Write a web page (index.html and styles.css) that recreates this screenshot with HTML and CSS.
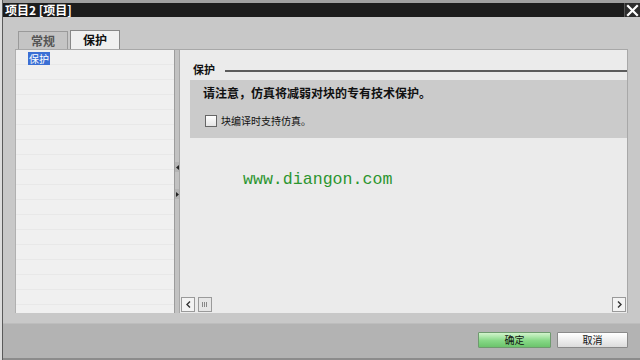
FILE: index.html
```html
<!DOCTYPE html>
<html lang="zh">
<head>
<meta charset="utf-8">
<title>项目2 [项目]</title>
<link rel="stylesheet" href="styles.css">
</head>
<body>
<div class="outside"></div>
<div class="dialog">
  <div class="titlebar">
    <span class="title">项目2 [项目]</span>
    <span class="close">
      <svg width="13" height="13" viewBox="0 0 13 13"><path d="M2 2 L11 11 M11 2 L2 11" stroke="#fff" stroke-width="2.2" stroke-linecap="square"/></svg>
    </span>
  </div>
  <div class="tabs">
    <div class="tab">常规</div>
    <div class="tab active">保护</div>
  </div>
  <div class="content">
    <div class="left-pane">
      <span class="tree-item">保护</span>
    </div>
    <div class="splitter">
      <span class="split-btn"><svg width="3" height="5" viewBox="0 0 3 5"><path d="M3 0 L0 2.5 L3 5 Z" fill="#222"/></svg></span>
      <span class="split-btn"><svg width="3" height="5" viewBox="0 0 3 5"><path d="M0 0 L3 2.5 L0 5 Z" fill="#222"/></svg></span>
    </div>
    <div class="right-pane">
      <div class="sec-head">
        <span class="sec-title">保护</span>
        <span class="sec-line"></span>
      </div>
      <div class="notice">
        <div class="notice-text">请注意，仿真将减弱对块的专有技术保护。</div>
        <label class="check-row"><span class="checkbox"></span><span class="check-label">块编译时支持仿真。</span></label>
      </div>
      <div class="watermark">www.diangon.com</div>
      <div class="spacer"></div>
      <div class="hscroll">
        <span class="sb-btn"><svg width="5" height="7" viewBox="0 0 5 7"><path d="M4 0.5 L1 3.5 L4 6.5" stroke="#333" stroke-width="1.4" fill="none"/></svg></span>
        <span class="sb-btn thumb"><svg width="6" height="5" viewBox="0 0 6 5"><path d="M0.5 0 V5 M2.5 0 V5 M4.5 0 V5" stroke="#888" stroke-width="1"/></svg></span>
        <span class="sb-track"></span>
        <span class="sb-btn"><svg width="5" height="7" viewBox="0 0 5 7"><path d="M1 0.5 L4 3.5 L1 6.5" stroke="#333" stroke-width="1.4" fill="none"/></svg></span>
      </div>
    </div>
  </div>
  <div class="gap"></div>
  <div class="footer">
    <button class="btn ok">确定</button>
    <button class="btn cancel">取消</button>
  </div>
</div>
</body>
</html>
```

FILE: styles.css
```css
html, body {
  margin: 0;
  padding: 0;
}
body {
  width: 640px;
  height: 360px;
  overflow: hidden;
  display: flex;
  background: #d6d6d6;
  font-family: "Noto Sans CJK SC", "DejaVu Sans", sans-serif;
}
.outside {
  width: 2px;
  background: #dcdcdc;
}
.dialog {
  flex: 1;
  display: flex;
  flex-direction: column;
  border-left: 1px solid #5a5a5a;
  background: #c8c8c8;
}
.titlebar {
  height: 14px;
  border-top: 3px solid #a0a0a0;
  background: #1c1c1c;
  display: flex;
  align-items: center;
  justify-content: space-between;
}
.title {
  color: #fff;
  font-size: 12px;
  font-weight: bold;
  line-height: 14px;
  padding-left: 2px;
}
.close {
  width: 15px;
  height: 14px;
  background: #2c2c2c;
  border-left: 1px solid #555;
  display: flex;
  align-items: center;
  justify-content: center;
}
.tabs {
  display: flex;
  align-items: flex-end;
  gap: 2px;
  padding: 13px 0 0 15px;
  height: 19px;
}
.tab {
  width: 48px;
  height: 17px;
  border: 1px solid #9a9a9a;
  border-bottom: none;
  background: #c4c4c4;
  color: #555;
  font-size: 12px;
  font-weight: bold;
  line-height: 17px;
  text-align: center;
}
.tab.active {
  height: 18px;
  background: #f0f0f0;
  color: #111;
  border-color: #888;
}
.content {
  display: flex;
  height: 263px;
  margin: 0 12px;
  border-top: 1px solid #a8a8a8;
}
.left-pane {
  width: 159px;
  display: flex;
  flex-direction: column;
  align-items: flex-start;
  background-color: #f0f0f0;
  background-image: repeating-linear-gradient(to bottom, transparent 0, transparent 14px, #e8e8e8 14px, #e8e8e8 15px);
  border-left: 1px solid #b0b0b0;
  padding-top: 2px;
  box-sizing: border-box;
}
.tree-item {
  margin-left: 12px;
  padding: 0 1px;
  height: 13px;
  line-height: 13px;
  font-size: 10px;
  color: #fff;
  background: #3b6fd4;
}
.splitter {
  width: 4px;
  background: #c2c2c2;
  border-left: 1px solid #9c9c9c;
  border-right: 1px solid #a8a8a8;
  display: flex;
  flex-direction: column;
  align-items: center;
  padding-top: 112px;
  gap: 17px;
}
.split-btn {
  width: 4px;
  height: 10px;
  background: #b4b4b4;
  display: flex;
  align-items: center;
  justify-content: center;
}
.right-pane {
  flex: 1;
  display: flex;
  flex-direction: column;
  background: #ebebeb;
  border-right: 1px solid #a8a8a8;
}
.sec-head {
  display: flex;
  align-items: flex-start;
  margin-top: 12px;
  padding-left: 13px;
  height: 14px;
  margin-bottom: 4px;
}
.sec-title {
  font-size: 11px;
  font-weight: bold;
  line-height: 14px;
  color: #111;
}
.sec-line {
  flex: 1;
  height: 2px;
  margin-top: 8px;
  margin-left: 10px;
  background: #5c5c5c;
}
.notice {
  margin-left: 10px;
  height: 58px;
  background: #cbcbcb;
  padding: 6px 0 0 13px;
  box-sizing: border-box;
}
.notice-text {
  font-size: 12px;
  font-weight: bold;
  line-height: 13px;
  color: #111;
}
.check-row {
  display: flex;
  align-items: center;
  gap: 4px;
  margin-top: 16px;
  margin-left: 2px;
}
.checkbox {
  width: 10px;
  height: 10px;
  border: 1px solid #666;
  background: linear-gradient(#ffffff, #e4e4e4);
}
.check-label {
  font-size: 10px;
  line-height: 12px;
  color: #111;
}
.watermark {
  margin-top: 32px;
  padding-left: 63px;
  font-family: "Liberation Mono", "DejaVu Sans Mono", monospace;
  font-size: 16.6px;
  line-height: 20px;
  color: #2b952f;
}
.spacer {
  flex: 1;
}
.hscroll {
  display: flex;
  align-items: center;
  gap: 3px;
  padding: 0 1px 0 1px;
  height: 15px;
  margin-bottom: 1px;
}
.sb-btn {
  width: 12px;
  height: 13px;
  border: 1px solid #9a9a9a;
  background: #f3f3f3;
  display: flex;
  align-items: center;
  justify-content: center;
}
.sb-btn.thumb {
  background: #e6e6e6;
}
.sb-track {
  flex: 1;
}
.gap {
  height: 10px;
}
.footer {
  flex: 1;
  background: #b3b3b3;
  border-top: 1px solid #bdbdbd;
  border-bottom: 2px solid #8c8c8c;
  display: flex;
  justify-content: flex-end;
  align-items: flex-start;
  gap: 6px;
  padding: 8px 12px 0 0;
}
.btn {
  height: 16px;
  padding: 0;
  font-family: "Noto Sans CJK SC", "DejaVu Sans", sans-serif;
  font-size: 10px;
  line-height: 14px;
  color: #111;
  border-radius: 1px;
}
.btn.ok {
  width: 73px;
  border: 1px solid #6f9a6f;
  background: linear-gradient(#d2f4cc, #86d886 55%, #6cc46c);
}
.btn.cancel {
  width: 71px;
  border: 1px solid #8a8a8a;
  background: linear-gradient(#ffffff, #ececec 55%, #dcdcdc);
}
```
